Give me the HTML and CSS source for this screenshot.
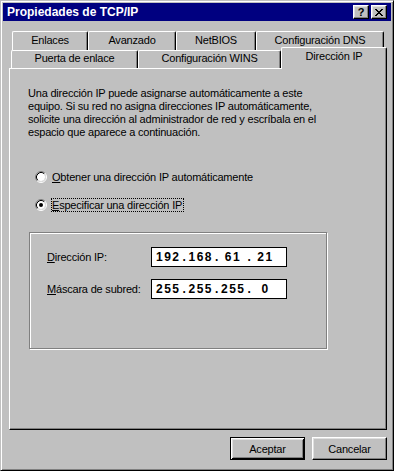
FILE: index.html
```html
<!DOCTYPE html>
<html lang="es">
<head>
<meta charset="utf-8">
<title>Propiedades de TCP/IP</title>
<link rel="stylesheet" href="styles.css">
</head>
<body>
<div class="window">
  <div class="titlebar">
    <span class="title">Propiedades de TCP/IP</span>
    <div class="tb-buttons">
      <span class="tb-btn help">?</span>
      <span class="tb-btn close">
        <svg width="8" height="7" viewBox="0 0 8 7" shape-rendering="crispEdges"><path d="M0 0h2v1H0z M6 0h2v1H6z M1 1h2v1H1z M5 1h2v1H5z M2 2h4v1H2z M3 3h2v1H3z M2 4h4v1H2z M1 5h2v1H1z M5 5h2v1H5z M0 6h2v1H0z M6 6h2v1H6z" fill="#000"/></svg>
      </span>
    </div>
  </div>
  <div class="sheet">
    <div class="tabs">
      <div class="tabrow back">
        <div class="tab w-enl">Enlaces</div>
        <div class="tab w-ava">Avanzado</div>
        <div class="tab w-net">NetBIOS</div>
        <div class="tab w-dns">Configuración DNS</div>
      </div>
      <div class="tabrow front">
        <div class="tab w-pue">Puerta de enlace</div>
        <div class="tab w-wins">Configuración WINS</div>
        <div class="tab w-ip selected">Dirección IP</div>
      </div>
    </div>
    <div class="panel">
      <p class="intro">Una dirección IP puede asignarse automáticamente a este<br>equipo. Si su red no asigna direcciones IP automáticamente,<br>solicite una dirección al administrador de red y escríbala en el<br>espacio que aparece a continuación.</p>
      <div class="radio r1">
        <svg class="rb" width="12" height="12" viewBox="0 0 12 12">
          <path d="M2.11 9.89A5.5 5.5 0 0 1 9.89 2.11" fill="none" stroke="#808080"/>
          <path d="M9.89 2.11A5.5 5.5 0 0 1 2.11 9.89" fill="none" stroke="#fff"/>
          <circle cx="6" cy="6" r="4" fill="#fff"/>
          <path d="M2.82 9.18A4.5 4.5 0 0 1 9.18 2.82" fill="none" stroke="#000"/>
          <path d="M9.18 2.82A4.5 4.5 0 0 1 2.82 9.18" fill="none" stroke="#dfdfdf"/>
        </svg>
        <span class="rlabel"><u>O</u>btener una dirección IP automáticamente</span>
      </div>
      <div class="radio r2">
        <svg class="rb" width="12" height="12" viewBox="0 0 12 12">
          <path d="M2.11 9.89A5.5 5.5 0 0 1 9.89 2.11" fill="none" stroke="#808080"/>
          <path d="M9.89 2.11A5.5 5.5 0 0 1 2.11 9.89" fill="none" stroke="#fff"/>
          <circle cx="6" cy="6" r="4" fill="#fff"/>
          <path d="M2.82 9.18A4.5 4.5 0 0 1 9.18 2.82" fill="none" stroke="#000"/>
          <path d="M9.18 2.82A4.5 4.5 0 0 1 2.82 9.18" fill="none" stroke="#dfdfdf"/>
          <circle cx="6" cy="6" r="2" fill="#000"/>
        </svg>
        <span class="rlabel focus"><u>E</u>specificar una dirección IP</span>
      </div>
      <div class="group">
        <div class="field">
          <span class="flabel"><u>D</u>irección IP:</span>
          <div class="ip"><span class="oct">192</span><span class="dot">.</span><span class="oct">168</span><span class="dot">.</span><span class="oct">61</span><span class="dot">.</span><span class="oct">21</span></div>
        </div>
        <div class="field f2">
          <span class="flabel"><u>M</u>áscara de subred:</span>
          <div class="ip"><span class="oct">255</span><span class="dot">.</span><span class="oct">255</span><span class="dot">.</span><span class="oct">255</span><span class="dot">.</span><span class="oct">0</span></div>
        </div>
      </div>
    </div>
    <div class="footer">
      <button class="btn default">Aceptar</button>
      <button class="btn">Cancelar</button>
    </div>
  </div>
</div>
</body>
</html>
```
FILE: styles.css
```css
* { box-sizing: border-box; }

body {
  margin: 0;
  background: #c0c0c0;
  font-family: "Liberation Sans", Arial, sans-serif;
  font-size: 11px;
  letter-spacing: -0.2px;
  color: #000;
}

.window {
  width: 394px;
  height: 471px;
  background: #c0c0c0;
  border: 1px solid;
  border-color: #c0c0c0 #000 #000 #c0c0c0;
  box-shadow: inset 1px 1px #fff, inset -1px -1px #808080;
  padding: 2px;
}

.titlebar {
  height: 18px;
  background: #000080;
  display: flex;
  align-items: center;
  justify-content: space-between;
  padding: 0 4px 0 4px;
}

.title {
  color: #fff;
  font-weight: bold;
  font-size: 12px;
  letter-spacing: 0;
  line-height: 14px;
}

.tb-buttons {
  display: flex;
  gap: 2px;
}

.tb-btn {
  width: 16px;
  height: 14px;
  background: #c0c0c0;
  border: 1px solid;
  border-color: #fff #000 #000 #fff;
  box-shadow: inset -1px -1px #808080, inset 1px 1px #dfdfdf;
  display: flex;
  align-items: center;
  justify-content: center;
}

.help {
  font-weight: bold;
  font-size: 11px;
  line-height: 12px;
  letter-spacing: 0;
}

.sheet {
  padding: 10px 4px 0 6px;
}

.tabrow {
  display: flex;
}

.back {
  height: 19px;
  padding-left: 3px;
}

.front {
  height: 18px;
  padding-left: 2px;
}

.tab {
  background: #c0c0c0;
  border-left: 1px solid #fff;
  border-top: 1px solid #fff;
  border-right: 1px solid #000;
  box-shadow: inset -1px 0 #808080;
  border-radius: 2px 2px 0 0;
  text-align: center;
  line-height: 13px;
  white-space: nowrap;
}

.back .tab {
  height: 19px;
  padding-top: 2px;
}

.front .tab {
  height: 18px;
  padding-top: 1px;
}

.front .tab.selected {
  height: 22px;
  margin-top: -3px;
  padding-top: 2px;
  position: relative;
  z-index: 1;
}

.w-enl { width: 76px; }
.w-ava { width: 88px; }
.w-net { width: 80px; }
.w-dns { width: 128px; }
.w-pue { width: 127px; }
.w-wins { width: 143px; }
.w-ip { width: 106px; }

.panel {
  height: 362px;
  border-left: 1px solid #fff;
  border-top: 1px solid #fff;
  border-right: 1px solid #000;
  border-bottom: 1px solid #000;
  box-shadow: inset -1px -1px #808080;
  padding: 18px 0 0 18px;
}

.intro {
  margin: 0;
  line-height: 13px;
  white-space: nowrap;
}

.radio {
  display: flex;
  align-items: center;
  height: 16px;
  margin-left: 7px;
}

.r1 { margin-top: 30px; }
.r2 { margin-top: 12px; }

.rb {
  flex: none;
  margin-right: 4px;
}

.rlabel {
  border: 1px dotted transparent;
  padding: 0 1px 0 0;
  line-height: 12px;
  white-space: nowrap;
}

.rlabel.focus {
  border-color: #000;
}

.group {
  margin: 19px 0 0 1px;
  width: 298px;
  height: 117px;
  border: 1px solid #808080;
  box-shadow: inset 1px 1px #fff, 1px 1px #fff;
  padding: 14px 0 0 17px;
}

.field {
  display: flex;
  align-items: center;
  height: 20px;
}

.f2 { margin-top: 12px; }

.flabel {
  width: 104px;
  flex: none;
  white-space: nowrap;
}

.ip {
  width: 136px;
  height: 20px;
  background: #fff;
  border: 1px solid #000;
  display: flex;
  align-items: center;
  padding-left: 4px;
  font-weight: bold;
  font-size: 12px;
  letter-spacing: 1.5px;
}

.oct {
  width: 24px;
  text-align: center;
  flex: none;
}

.dot {
  width: 8.5px;
  text-align: center;
  flex: none;
  letter-spacing: 0;
}

.footer {
  display: flex;
  justify-content: flex-end;
  gap: 7px;
  margin-top: 7px;
}

.btn {
  width: 75px;
  height: 23px;
  padding: 0;
  margin: 0;
  font: inherit;
  letter-spacing: inherit;
  color: #000;
  background: #c0c0c0;
  border: 1px solid;
  border-color: #fff #000 #000 #fff;
  box-shadow: inset -1px -1px #808080, inset 1px 1px #dfdfdf;
}

.btn.default {
  border-color: #000;
  box-shadow: inset 1px 1px #fff, inset -1px -1px #000, inset 2px 2px #dfdfdf, inset -2px -2px #808080;
}
```
